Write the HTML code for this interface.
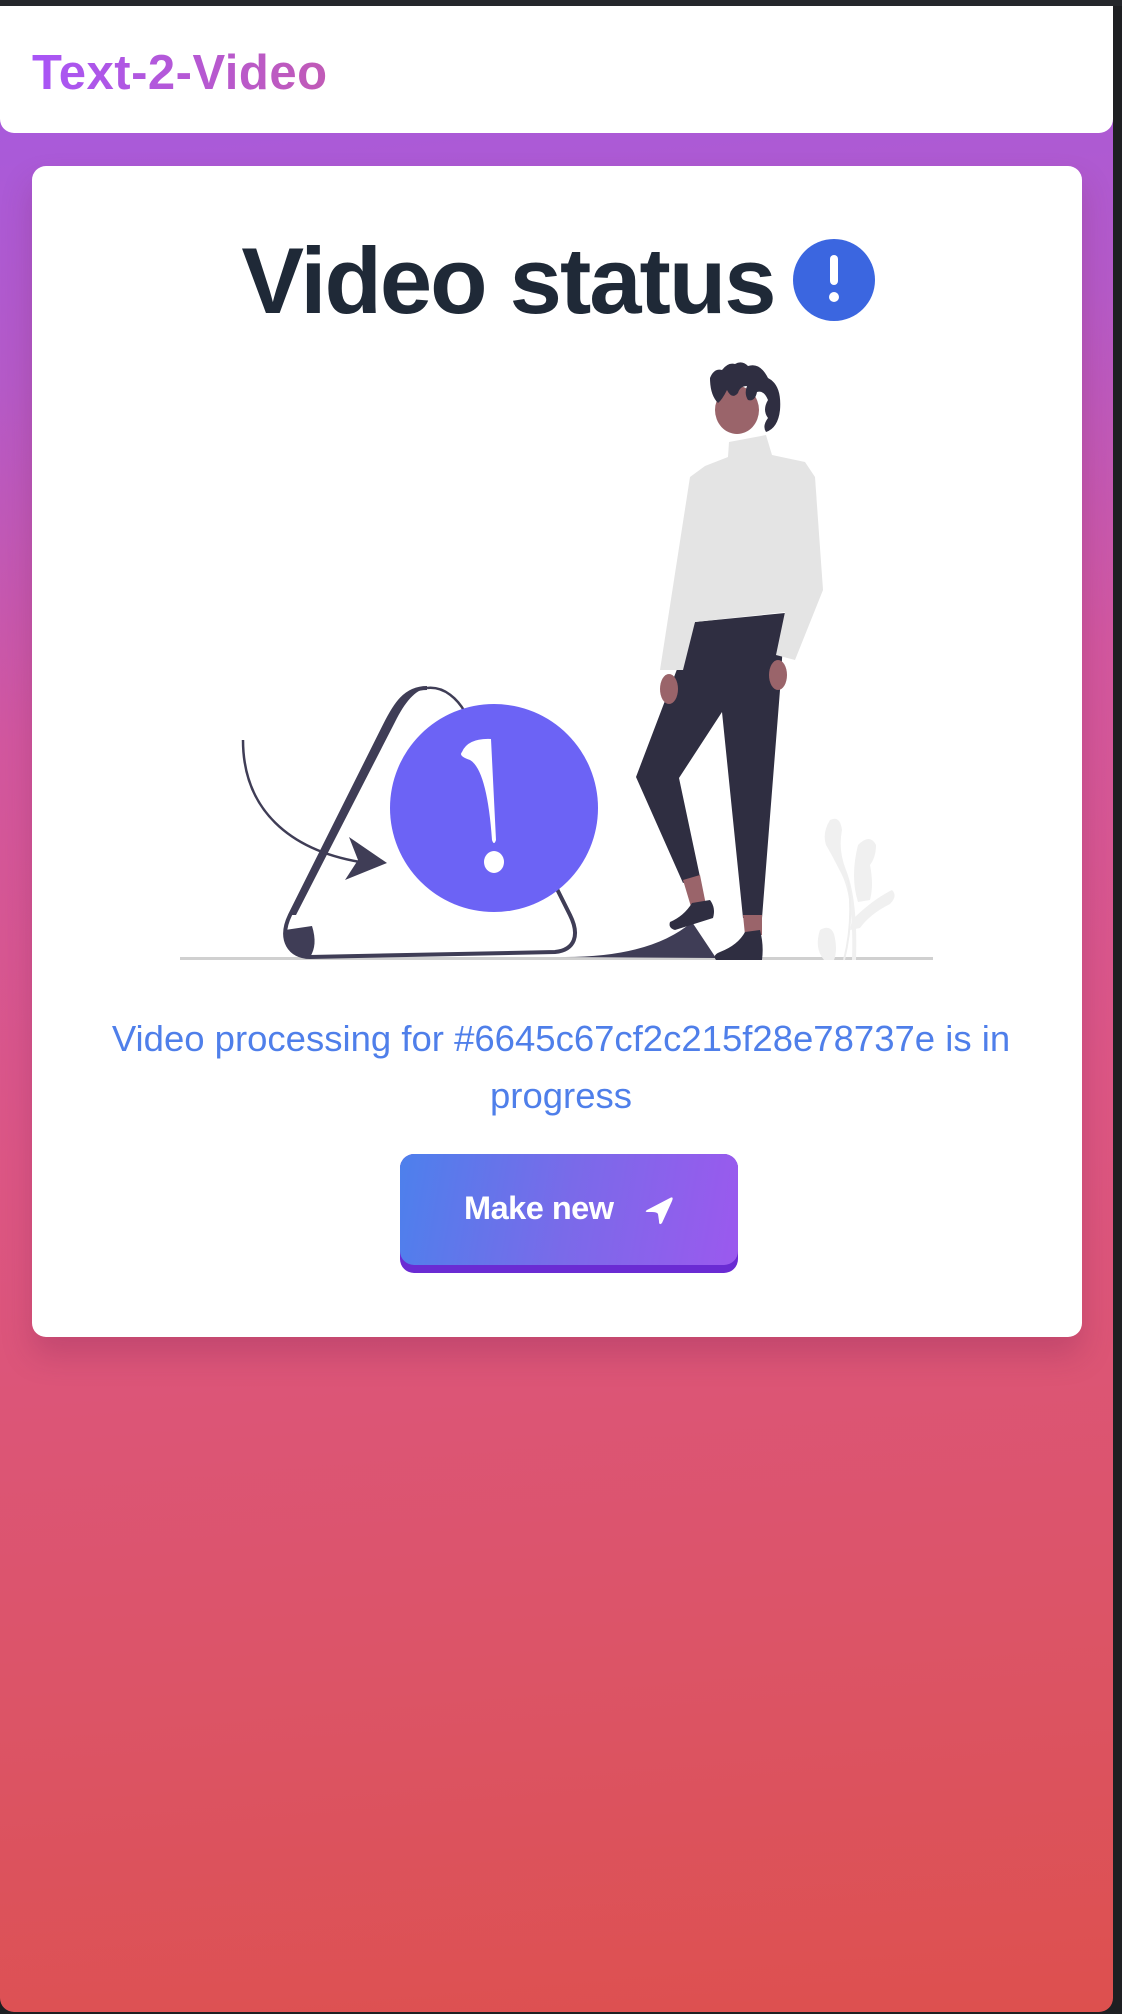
<!DOCTYPE html>
<html><head><meta charset="utf-8"><style>
html,body{margin:0;padding:0;}
body{width:1122px;height:2014px;background:#1e1f22;position:relative;overflow:hidden;font-family:"Liberation Sans",sans-serif;}
.topbar{position:absolute;left:0;top:0;width:1122px;height:6px;background:#25272b;}
.main{position:absolute;left:0;top:6px;width:1113px;height:2006px;border-radius:0 0 14px 14px;background:linear-gradient(175deg,#a35ae3 0%,#b55ac8 18%,#d2579f 35%,#dc5685 55%,#dc5468 80%,#dd504e 100%);}
.nav{position:absolute;left:0;top:6px;width:1113px;height:127px;background:#fff;border-radius:0 0 14px 14px;}
.logo{position:absolute;left:32px;top:39px;font-size:49px;font-weight:bold;letter-spacing:0.5px;background:linear-gradient(90deg,#a855f7,#c15bb6);-webkit-background-clip:text;background-clip:text;color:transparent;}
.card{position:absolute;left:32px;top:166px;width:1050px;height:1171px;background:#fff;border-radius:14px;box-shadow:0 18px 30px rgba(120,30,80,0.25);}
h1{position:absolute;left:0;top:226px;width:1122px;margin:0;text-align:center;font-size:94px;font-weight:bold;color:#1f2937;letter-spacing:-2px;line-height:110px;}
.msg{position:absolute;left:40px;width:1042px;top:1010px;text-align:center;font-size:36.5px;color:#4f7fea;line-height:57px;}
.btn{position:absolute;left:400px;top:1154px;width:338px;height:119px;border-radius:14px;background:#6a2bd3;}
.btn .face{position:absolute;left:0;top:0;width:338px;height:111px;border-radius:14px;background:linear-gradient(100deg,#4d80ec,#7a6ae9 50%,#9b59ee);}
.btn span{position:absolute;left:64px;top:36px;font-size:32.5px;font-weight:bold;color:#fff;letter-spacing:-0.5px;}
</style></head><body>
<div class="topbar"></div>
<div class="main"></div>
<div class="nav"><div class="logo">Text-2-Video</div></div>
<div class="card"></div>
<h1>Video status <span style="display:inline-block;width:82px;height:82px;vertical-align:-6px;"></span></h1>
<svg width="1122" height="2014" viewBox="0 0 1122 2014" style="position:absolute;left:0;top:0">
<circle cx="834" cy="280" r="41" fill="#3b66e0"/>
<rect x="830" y="255" width="8" height="30" rx="4" fill="#fff"/>
<circle cx="834" cy="297" r="5" fill="#fff"/>
<rect x="180" y="957" width="753" height="3" fill="#d0d0d0"/>
<g fill="#f0f0f0">
<path d="M830 820 q10 -5 12 10 q-4 20 4 40 q12 30 10 90 l-4 0 q2 -60 -10 -85 q-10 -20 -16 -30 q-4 -12 4 -25z"/>
<path d="M858 845 q12 -12 18 0 q0 12 -6 20 q4 20 0 35 l-12 2 q-8 -25 0 -57z"/>
<path d="M852 920 q20 -20 40 -30 q6 6 -2 14 q-20 10 -30 24 l-10 2z"/>
<path d="M820 930 q10 -6 14 4 q4 16 0 26 l-10 0 q-10 -12 -4 -30z"/>
<path d="M848 880 q6 40 -4 80" stroke="#eee" stroke-width="2" fill="none"/>
</g>
<path d="M427 688 C405 688 395 705 385 725 L290 915 C278 940 290 957 310 957 L555 952 C575 950 580 935 570 915 L555 885" fill="none" stroke="#3f3d56" stroke-width="4"/>
<path d="M427 688 C405 688 395 705 388 722 L290 915 L296 915 L395 722 C405 702 415 690 427 688z" fill="#3f3d56"/>
<path d="M427 688 C445 686 458 700 465 712" fill="none" stroke="#3f3d56" stroke-width="2.5"/>
<path d="M285 930 L312 926 Q318 945 310 957 Q288 955 285 930z" fill="#3f3d56"/>
<path d="M243 740 C243 810 290 850 360 862" fill="none" stroke="#3f3d56" stroke-width="2.5"/>
<path d="M349 837 L387 863 L345 880 L358 860z" fill="#3f3d56"/>
<circle cx="494" cy="808" r="104" fill="#6c63f5"/>
<path d="M462 752 Q468 738 491 739 L496 840 Q494 846 492 840 Q487 770 470 760 Q458 756 462 752z" fill="#fff"/>
<ellipse cx="494" cy="862" rx="10" ry="11" fill="#fff"/>
<path d="M560 957 Q650 958 692 922 L716 958z" fill="#3f3d56"/>
<path d="M695 622 L785 613 L780 690 L762 918 L743 918 L722 712 L679 778 L700 877 L683 883 L636 777 L663 706z" fill="#2f2e41"/>
<path d="M683 880 L700 875 L706 905 L692 910z" fill="#9a646a"/>
<path d="M743 915 L762 915 L762 935 L745 935z" fill="#9a646a"/>
<path d="M692 903 L710 900 Q716 908 713 918 L675 930 Q668 928 670 922 Q684 916 692 903z" fill="#2f2e41"/>
<path d="M745 932 L760 930 Q764 945 762 960 L716 960 Q712 955 720 952 Q738 945 745 932z" fill="#2f2e41"/>
<ellipse cx="669" cy="689" rx="9" ry="15" fill="#9a646a"/>
<ellipse cx="778" cy="675" rx="9" ry="15" fill="#9a646a"/>
<path d="M729 442 L766 435 L772 455 L805 462 L815 477 L823 590 L795 660 L776 655 L785 612 L695 622 L683 670 L660 670 L690 477 L705 466 L728 457z" fill="#e4e4e4"/>
<ellipse cx="737" cy="410" rx="22" ry="24" fill="#9a646a"/>
<path d="M710 378 Q714 368 722 370 Q728 362 735 364 Q742 360 748 366 Q760 362 768 378 Q782 385 780 410 Q778 428 766 432 Q762 426 768 418 Q762 410 768 400 Q764 390 757 392 Q755 402 748 400 Q744 394 747 386 Q740 386 738 393 Q732 400 727 390 Q722 400 718 403 Q710 395 710 378z" fill="#2f2e41"/>
</svg>
<div class="msg">Video processing for #6645c67cf2c215f28e78737e is in<br>progress</div>
<div class="btn"><div class="face"><span>Make new</span></div></div>
<svg width="1122" height="2014" style="position:absolute;left:0;top:0;pointer-events:none">
<path d="M647 1210 L670 1198 Q674 1196 672 1201 L662 1223 Q659 1226 659 1221 L658 1214 Q657 1212 652 1212 L648 1212 Q644 1212 647 1210z" fill="#fff"/>
</svg>
</body></html>
